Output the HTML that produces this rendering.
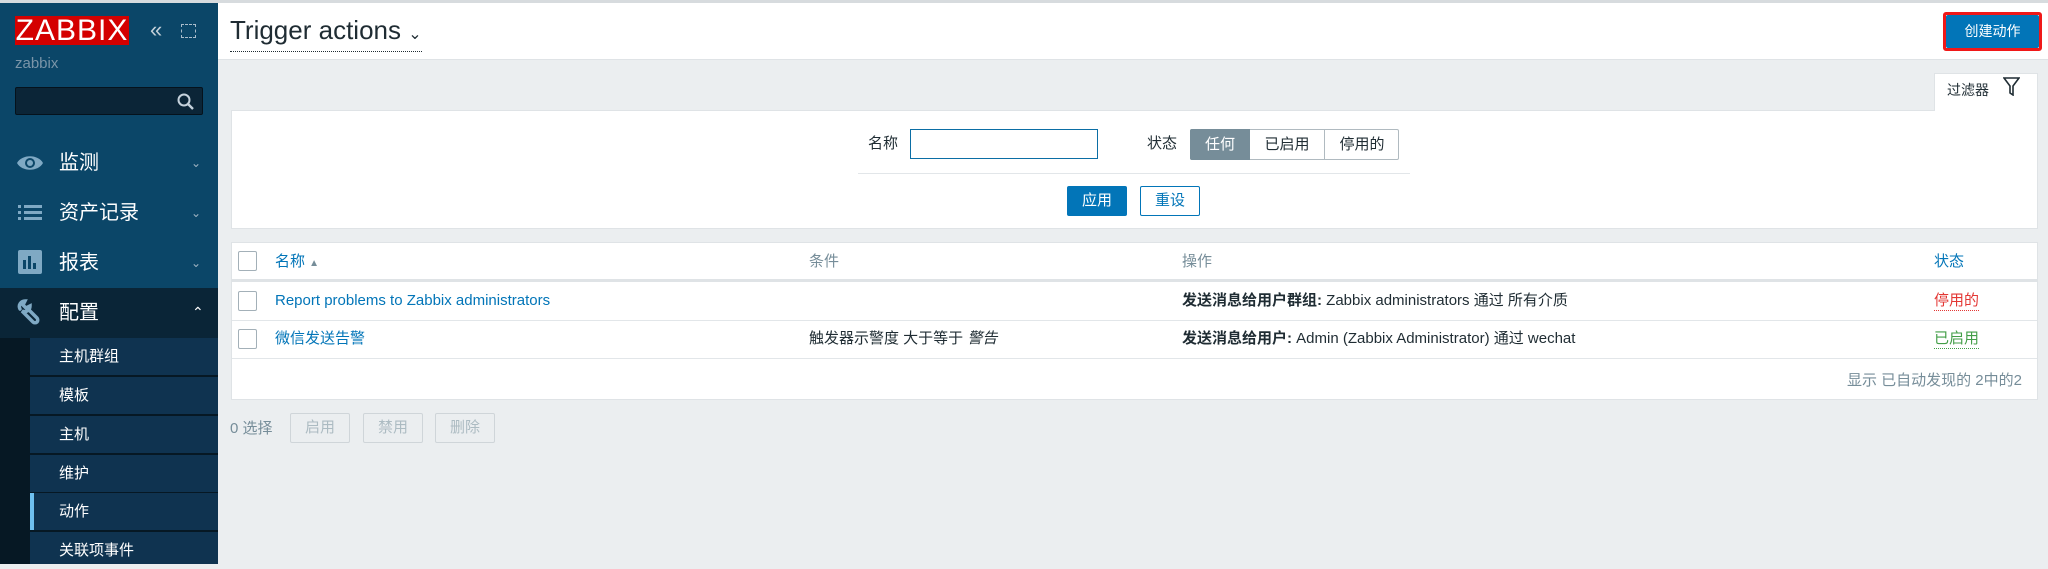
<!DOCTYPE html>
<html><head><meta charset="utf-8"><style>
*{box-sizing:border-box;margin:0;padding:0}
body{width:2048px;height:564px;overflow:hidden;background:#ebeef0;font-family:"Liberation Sans","Noto Sans CJK SC",sans-serif;font-size:15px;line-height:18px;color:#1f2c33;position:relative}
.a{position:absolute}
#sb{left:0;top:0;width:218px;height:564px;background:#0b4668}
.logo{left:15px;top:16px;width:114px;height:29px;background:#d40000;color:#fff;font-size:30px;line-height:29px;text-align:center;letter-spacing:1px}
.mi{left:59px;color:#fff;font-size:20px;line-height:24px}
.chev{left:191px;color:#9fb4c2;font-size:12px}
.sub{left:30px;width:188px;height:37px;background:#0f3350;color:#fff;font-size:15px;line-height:37px;padding-left:29px}
.btn{border-radius:2px;text-align:center;font-size:15px}
.cb{width:19px;height:20px;border:1px solid #a3b0b8;border-radius:2px;background:#fff}
.hl{height:1px;background:#e2e6e9}
</style></head><body>
<div class="a" style="left:0;top:0;width:2048px;height:3px;background:#d7dbde"></div>
<div id="sb" class="a" style="top:3px;height:561px"></div>
<div class="a logo">ZABBIX</div>
<div class="a" style="left:150px;top:17px;color:#c3d0d9;font-size:22px;line-height:26px">«</div>
<div class="a" style="left:181px;top:24px;width:15px;height:14px;border:1px dashed #a9bccb"></div>
<div class="a" style="left:15px;top:55px;color:#7a95a8;font-size:15px">zabbix</div>
<div class="a" style="left:15px;top:87px;width:188px;height:28px;background:#0b2537;border:1px solid #05121c;border-radius:2px"></div>
<svg class="a" style="left:177px;top:93px" width="18" height="18"><circle cx="7" cy="7" r="5.5" stroke="#c5d2dc" stroke-width="2" fill="none"/><path d="M11 11l5 5" stroke="#c5d2dc" stroke-width="2.4"/></svg>
<svg class="a" style="left:16px;top:152px" width="28" height="22"><path d="M1 11C6 2 22 2 27 11C22 20 6 20 1 11Z" fill="#7fa9c4"/><circle cx="14" cy="11" r="5" fill="#0b4668"/><circle cx="14" cy="11" r="3" fill="#7fa9c4"/></svg>
<div class="a mi" style="top:151px">监测</div><div class="a chev" style="top:154px">⌄</div>
<svg class="a" style="left:18px;top:205px" width="24" height="16"><g fill="#7fa9c4"><rect x="0" y="0" width="3" height="3"/><rect x="0" y="6" width="3" height="3"/><rect x="0" y="12" width="3" height="3"/><rect x="6" y="0" width="18" height="3"/><rect x="6" y="6" width="18" height="3"/><rect x="6" y="12" width="18" height="3"/></g></svg>
<div class="a mi" style="top:201px">资产记录</div><div class="a chev" style="top:204px">⌄</div>
<svg class="a" style="left:18px;top:250px" width="24" height="24"><rect width="24" height="24" rx="2" fill="#7fa9c4"/><g fill="#0b4668"><rect x="5" y="10" width="3" height="9"/><rect x="10" y="6" width="3" height="13"/><rect x="15" y="13" width="3" height="6"/></g></svg>
<div class="a mi" style="top:251px">报表</div><div class="a chev" style="top:254px">⌄</div>
<div class="a" style="left:0;top:288px;width:218px;height:50px;background:#0a2537"></div>
<svg class="a" style="left:17px;top:299px" width="26" height="27"><path d="M4 4l4 4M3 10c-2-4 1-8 5-8l-2 4 3 3 4-2c0 4-4 7-8 5l11 11c1 1 3 1 4 0s1-3 0-4L12 11" stroke="#7fa9c4" stroke-width="3.5" fill="none" stroke-linecap="round"/></svg>
<div class="a mi" style="top:301px">配置</div><div class="a" style="left:192px;top:303px;color:#fff;font-size:14px">⌃</div>
<div class="a" style="left:0;top:338px;width:218px;height:226px;background:#061824"></div>
<div class="a sub" style="top:338px">主机群组</div>
<div class="a sub" style="top:377px">模板</div>
<div class="a sub" style="top:416px">主机</div>
<div class="a sub" style="top:455px">维护</div>
<div class="a sub" style="top:493px;border-left:4px solid #6ec0ef;padding-left:25px">动作</div>
<div class="a sub" style="top:532px;height:32px">关联项事件</div>

<div class="a" style="left:218px;top:3px;width:1830px;height:57px;background:#fff;border-bottom:1px solid #dfe3e6"></div>
<div class="a" style="left:230px;top:15px;font-size:26px;color:#1f2c33;border-bottom:1px dotted #1f2c33;padding-bottom:1px;line-height:31px">Trigger actions <span style="font-size:16px">⌄</span></div>
<div class="a" style="left:1943px;top:12px;width:99px;height:39px;border:3px solid #f01818;border-radius:3px"></div>
<div class="a btn" style="left:1946px;top:15px;width:93px;height:33px;background:#0275b8;color:#fff;line-height:33px;font-size:14px">创建动作</div>

<div class="a" style="left:1934px;top:73px;width:104px;height:40px;background:#fff;border:1px solid #dfe3e6;border-bottom:none"></div>
<div class="a" style="left:1947px;top:81px;font-size:14px">过滤器</div>
<svg class="a" style="left:2003px;top:77px" width="17" height="19"><path d="M1 1h15l-6 8v9l-3-2V9Z" fill="none" stroke="#1f2c33" stroke-width="1.6"/></svg>
<div class="a" style="left:231px;top:110px;width:1807px;height:119px;background:#fff;border:1px solid #dfe3e6"></div>
<div class="a" style="left:1935px;top:109px;width:102px;height:3px;background:#fff"></div>
<div class="a" style="left:868px;top:135px">名称</div>
<div class="a" style="left:910px;top:129px;width:188px;height:30px;border:1px solid #0b6ea5;background:#fff"></div>
<div class="a" style="left:1147px;top:135px">状态</div>
<div class="a" style="left:1190px;top:129px;width:209px;height:31px;border:1px solid #b0bac0;border-radius:2px;background:#fff"></div>
<div class="a" style="left:1190px;top:129px;width:60px;height:31px;background:#768d99;color:#fff;text-align:center;line-height:31px;border-radius:2px 0 0 2px">任何</div>
<div class="a" style="left:1250px;top:129px;width:74px;height:31px;text-align:center;line-height:31px">已启用</div>
<div class="a" style="left:1324px;top:129px;width:1px;height:31px;background:#b0bac0"></div>
<div class="a" style="left:1325px;top:129px;width:74px;height:31px;text-align:center;line-height:31px">停用的</div>
<div class="a hl" style="left:858px;top:173px;width:552px"></div>
<div class="a btn" style="left:1067px;top:186px;width:60px;height:30px;background:#0275b8;color:#fff;line-height:30px">应用</div>
<div class="a btn" style="left:1140px;top:186px;width:60px;height:30px;border:1px solid #0275b8;color:#0275b8;line-height:28px;background:#fff">重设</div>

<div class="a" style="left:231px;top:242px;width:1807px;height:158px;background:#fff;border:1px solid #dfe3e6"></div>
<div class="a" style="left:232px;top:279px;width:1805px;height:3px;background:#dfe3e6"></div>
<div class="a hl" style="left:232px;top:320px;width:1805px"></div>
<div class="a hl" style="left:232px;top:358px;width:1805px"></div>
<div class="a cb" style="left:238px;top:251px"></div>
<div class="a cb" style="left:238px;top:291px"></div>
<div class="a cb" style="left:238px;top:329px"></div>
<div class="a" style="left:275px;top:253px;color:#0275b8">名称 <span style="font-size:10px;color:#768d99">▲</span></div>
<div class="a" style="left:809px;top:253px;color:#768d99">条件</div>
<div class="a" style="left:1182px;top:253px;color:#768d99">操作</div>
<div class="a" style="left:1934px;top:253px;color:#0275b8">状态</div>
<div class="a" style="left:275px;top:292px;color:#0275b8">Report problems to Zabbix administrators</div>
<div class="a" style="left:1182px;top:292px"><b>发送消息给用户群组:</b> Zabbix administrators 通过 所有介质</div>
<div class="a" style="left:1934px;top:292px;color:#e33734;border-bottom:1px dotted #e33734">停用的</div>
<div class="a" style="left:275px;top:330px;color:#0275b8">微信发送告警</div>
<div class="a" style="left:809px;top:330px">触发器示警度 大于等于 <i>警告</i></div>
<div class="a" style="left:1182px;top:330px"><b>发送消息给用户:</b> Admin (Zabbix Administrator) 通过 wechat</div>
<div class="a" style="left:1934px;top:330px;color:#429e47;border-bottom:1px dotted #429e47">已启用</div>
<div class="a" style="left:1500px;top:372px;width:522px;text-align:right;color:#768d99">显示 已自动发现的 2中的2</div>

<div class="a" style="left:230px;top:420px;color:#768d99">0 选择</div>
<div class="a btn" style="left:290px;top:413px;width:60px;height:30px;border:1px solid #cfd5d9;background:#ebeef0;color:#acbbc2;line-height:28px">启用</div>
<div class="a btn" style="left:363px;top:413px;width:60px;height:30px;border:1px solid #cfd5d9;background:#ebeef0;color:#acbbc2;line-height:28px">禁用</div>
<div class="a btn" style="left:435px;top:413px;width:60px;height:30px;border:1px solid #cfd5d9;background:#ebeef0;color:#acbbc2;line-height:28px">删除</div>
</body></html>
